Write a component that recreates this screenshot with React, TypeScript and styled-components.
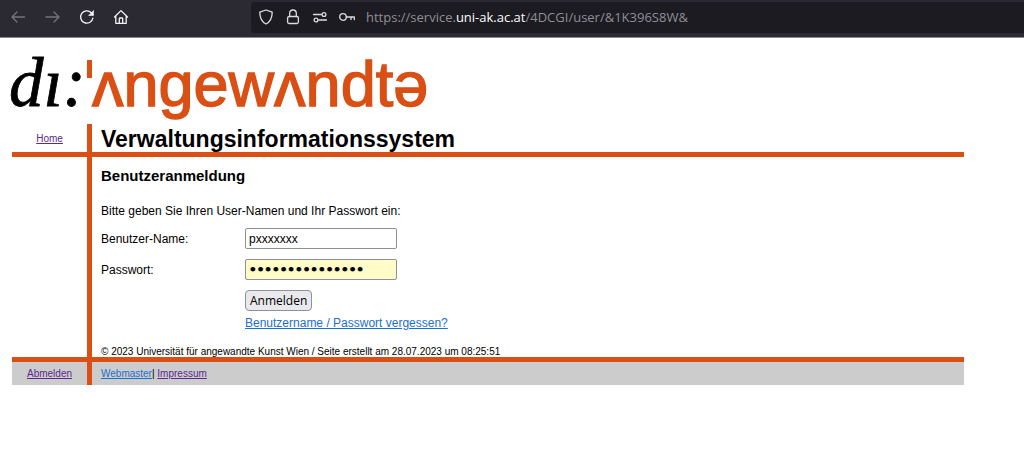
import React from "react";
import styled, { createGlobalStyle } from "styled-components";

const ORANGE = "#d94f14";

const GlobalStyle = createGlobalStyle`
  * { box-sizing: border-box; }
  body {
    margin: 0;
    background: #fff;
    color: #000;
    font-family: "Liberation Sans", Arial, sans-serif;
    font-size: 12px;
    overflow-x: hidden;
  }
`;

const Toolbar = styled.header`
  display: flex;
  align-items: center;
  height: 38px;
  padding: 2px 0 5px 11px;
  background: #2b2a33;
  border-bottom: 1px solid #8a8a8e;
`;

const NavButtons = styled.nav`
  display: flex;
  flex: none;
  gap: 18px;
  width: 240px;
`;

const IconButton = styled.button<{ $dim?: boolean }>`
  display: block;
  width: 16px;
  height: 16px;
  padding: 0;
  border: 0;
  background: none;
  color: ${(p) => (p.$dim ? "#75747b" : "#f4f4f7")};
`;

const Icon = styled.svg`
  display: block;
  flex: none;
  width: 16px;
  height: 16px;
  fill: none;
  stroke: currentColor;
  stroke-width: 1.3;
  stroke-linecap: round;
  stroke-linejoin: round;
`;

const AddressBar = styled.div`
  display: flex;
  flex: 1;
  align-items: center;
  gap: 11px;
  height: 31px;
  padding-left: 7px;
  border-radius: 4px 0 0 4px;
  background: #1c1b22;
  color: #dcdce0;
`;

const Url = styled.span`
  color: #8f8e96;
  font-family: "Open Sans", "Noto Sans", sans-serif;
  font-size: 13px;
  line-height: 20px;
  white-space: nowrap;

  b {
    color: #fbfbfe;
    font-weight: 400;
  }
`;

const Page = styled.main`
  padding: 0 60px 0 12px;
`;

const Logo = styled.svg`
  display: block;
  width: 440px;
  height: 86px;
  margin-left: -12px;
`;

const Row = styled.div<{ $footer?: boolean }>`
  display: grid;
  grid-template-columns: 80px 1fr;
  background: ${(p) => (p.$footer ? "#cccccc" : "transparent")};
`;

const Side = styled.div`
  display: flex;
  align-items: center;
  justify-content: center;
  border-right: 5px solid ${ORANGE};
  font-size: 10px;
`;

const Rule = styled.hr`
  height: 5px;
  margin: 0;
  border: 0;
  background: ${ORANGE};
`;

const Title = styled.h1`
  margin: 0;
  padding: 2px 0 0 9px;
  font-size: 23px;
  line-height: 26px;
`;

const Content = styled.section`
  padding: 10px 0 0 9px;
`;

const Heading = styled.h2`
  margin: 0 0 18px;
  font-size: 15px;
  line-height: 18px;
`;

const Intro = styled.p`
  margin: 0 0 9px;
  line-height: 16px;
`;

const Form = styled.form`
  display: grid;
  grid-template-columns: 144px 1fr;
  row-gap: 10px;
  align-items: center;
  justify-items: start;
`;

const Field = styled.input`
  width: 152px;
  height: 21px;
  padding: 0 3px;
  border: 1px solid #8f8f9d;
  border-radius: 2px;
  background: #fff;
  color: #000;
  font: 12px "Liberation Sans", Arial, sans-serif;
`;

const PasswordField = styled(Field)`
  background: #fffcc8;
  font: 13px "DejaVu Sans", sans-serif;
  -webkit-text-stroke: 1px #000;
`;

const Submit = styled.button`
  grid-column: 2;
  height: 21px;
  padding: 0 4px;
  border: 1px solid #8f8f9d;
  border-radius: 4px;
  background: #e9e9ed;
  color: #000;
  font: 12px "Open Sans", "Noto Sans", sans-serif;
`;

const Link = styled.a<{ $fresh?: boolean }>`
  color: ${(p) => (p.$fresh ? "#1a6fd0" : "#592a91")};
`;

const Forgot = styled(Link)`
  display: block;
  width: fit-content;
  margin: 4px 0 0 144px;
  line-height: 16px;
`;

const Copyright = styled.p`
  margin: 15px 0 0;
  font-size: 10px;
  line-height: 11px;
`;

const FooterLinks = styled.div`
  padding: 6px 0 5px 9px;
  font-size: 10px;
  line-height: 12px;
`;

export default function App() {
  return (
    <>
      <GlobalStyle />
      <Toolbar>
        <NavButtons aria-label="Browser">
          <IconButton $dim aria-label="Zurück">
            <Icon viewBox="0 0 16 16"><path d="M13.500 8H1M6 3 1 8l5 5" /></Icon>
          </IconButton>
          <IconButton $dim aria-label="Vor">
            <Icon viewBox="0 0 16 16"><path d="M1 8H14M9 3l5 5-5 5" /></Icon>
          </IconButton>
          <IconButton aria-label="Neu laden">
            <Icon viewBox="0 0 16 16">
              <path d="M13.900 9.200A6.200 6.200 0 1 1 12.300 3.700" />
              <path d="M14.500 1.800v4.700H9.800z" fill="currentColor" strokeWidth="0.6" />
            </Icon>
          </IconButton>
          <IconButton aria-label="Startseite">
            <Icon viewBox="0 0 16 16">
              <path d="M1.500 8 8 1.600 14.500 8M2.800 7v7.300h10.400V7M6.300 14V9.800q0-.8.8-.8h1.800q.8 0 .8.800V14" />
            </Icon>
          </IconButton>
        </NavButtons>
        <AddressBar>
          <Icon viewBox="0 0 16 16">
            <path d="M8 1 14.200 3.200C14.200 9 12.200 12.800 8 15 3.800 12.800 1.800 9 1.800 3.200z" />
          </Icon>
          <Icon viewBox="0 0 16 16">
            <rect x="2.600" y="7.500" width="10.800" height="7" rx="1.500" />
            <path d="M4.700 7.500V4.300a3.300 3.300 0 0 1 6.600 0v3.200" />
          </Icon>
          <Icon viewBox="0 0 16 16">
            <path d="M1.500 5.500h7.800M6.700 11h7.800" />
            <circle cx="12" cy="5.500" r="1.900" />
            <circle cx="4" cy="11" r="1.900" />
          </Icon>
          <Icon viewBox="0 0 16 16">
            <circle cx="4" cy="8" r="3.300" />
            <path d="M7.300 8h8v2.500M12 8v2.500" />
          </Icon>
          <Url>https://service.<b>uni-ak.ac.at</b>/4DCGI/user/&amp;1K396S8W&amp;</Url>
        </AddressBar>
      </Toolbar>
      <Page>
        <Logo viewBox="0 0 440 86" role="img" aria-label="di: Angewandte">
          <text x="9" y="68" fontFamily="Liberation Serif, serif" fontStyle="italic" fontSize="69" stroke="#000" strokeWidth="0.8">dı:</text>
          <rect x="87" y="22" width="5" height="18" fill={ORANGE} />
          <text x="92" y="68" fontFamily="Liberation Sans, sans-serif" fontSize="63" fill={ORANGE} stroke={ORANGE} strokeWidth="1.4">ʌngewʌndtə</text>
        </Logo>
        <Row>
          <Side><Link href="#home">Home</Link></Side>
          <Title>Verwaltungsinformationssystem</Title>
        </Row>
        <Rule />
        <Row>
          <Side />
          <Content>
            <Heading>Benutzeranmeldung</Heading>
            <Intro>Bitte geben Sie Ihren User-Namen und Ihr Passwort ein:</Intro>
            <Form onSubmit={(e) => e.preventDefault()}>
              <label htmlFor="user">Benutzer-Name:</label>
              <Field id="user" type="text" defaultValue="pxxxxxxx" />
              <label htmlFor="password">Passwort:</label>
              <PasswordField id="password" type="password" defaultValue="abcdefghijklmno" />
              <Submit type="submit">Anmelden</Submit>
            </Form>
            <Forgot $fresh href="#vergessen">Benutzername / Passwort vergessen?</Forgot>
            <Copyright>© 2023 Universität für angewandte Kunst Wien / Seite erstellt am 28.07.2023 um 08:25:51</Copyright>
          </Content>
        </Row>
        <Rule />
        <Row $footer as="footer">
          <Side><Link href="#abmelden">Abmelden</Link></Side>
          <FooterLinks>
            <Link $fresh href="#webmaster">Webmaster</Link>| <Link href="#impressum">Impressum</Link>
          </FooterLinks>
        </Row>
      </Page>
    </>
  );
}
